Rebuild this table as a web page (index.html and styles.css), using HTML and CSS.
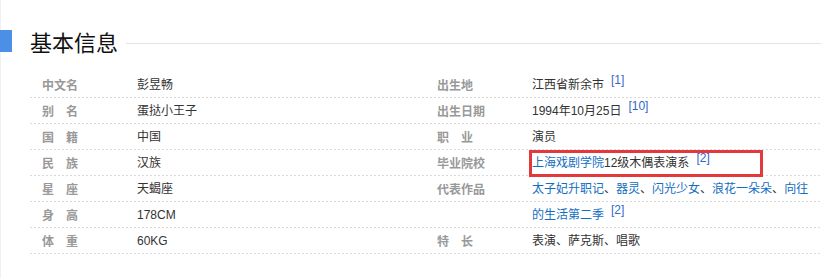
FILE: index.html
```html
<!DOCTYPE html>
<html lang="zh-CN">
<head>
<meta charset="utf-8">
<title>基本信息</title>
<link rel="stylesheet" href="styles.css">
</head>
<body>
<div class="page">
  <div class="title-row">
    <span class="bar"></span>
    <h2 class="title">基本信息</h2>
    <span class="rule"></span>
  </div>
  <div class="info">
    <dl class="col">
      <div class="item"><dt class="label">中文名</dt><dd class="value">彭昱畅</dd></div>
      <div class="item"><dt class="label">别　名</dt><dd class="value">蛋挞小王子</dd></div>
      <div class="item"><dt class="label">国　籍</dt><dd class="value">中国</dd></div>
      <div class="item"><dt class="label">民　族</dt><dd class="value">汉族</dd></div>
      <div class="item"><dt class="label">星　座</dt><dd class="value">天蝎座</dd></div>
      <div class="item"><dt class="label">身　高</dt><dd class="value">178CM</dd></div>
      <div class="item"><dt class="label">体　重</dt><dd class="value">60KG</dd></div>
    </dl>
    <dl class="col">
      <div class="item"><dt class="label">出生地</dt><dd class="value">江西省新余市<sup class="ref">[1]</sup></dd></div>
      <div class="item"><dt class="label">出生日期</dt><dd class="value">1994年10月25日<sup class="ref">[10]</sup></dd></div>
      <div class="item"><dt class="label">职　业</dt><dd class="value">演员</dd></div>
      <div class="item"><dt class="label">毕业院校</dt><dd class="value marked"><a class="link" href="#">上海戏剧学院</a>12级木偶表演系<sup class="ref">[2]</sup><span class="highlight"></span></dd></div>
      <div class="item"><dt class="label">代表作品</dt><dd class="value wrap"><a class="link" href="#">太子妃升职记</a>、<a class="link" href="#">器灵</a>、<a class="link" href="#">闪光少女</a>、<a class="link" href="#">浪花一朵朵</a>、<a class="link" href="#">向往的生活第二季</a><sup class="ref">[2]</sup></dd></div>
      <div class="item"><dt class="label">特　长</dt><dd class="value">表演、萨克斯、唱歌</dd></div>
    </dl>
  </div>
</div>
</body>
</html>
```

FILE: styles.css
```css
html, body {
  margin: 0;
  padding: 0;
  background: #fff;
}

body {
  font-family: "Liberation Sans", "Noto Sans CJK SC", sans-serif;
  font-size: 12px;
  color: #333;
}

.page {
  width: 821px;
  height: 278px;
  box-sizing: border-box;
  padding-top: 30px;
  border-left: 1px solid #f0f0f0;
}

.title-row {
  display: flex;
  align-items: flex-start;
  height: 22px;
  margin-left: -1px;
}

.bar {
  width: 12px;
  height: 22px;
  background: #4b8fe6;
  flex: none;
}

.title {
  margin: 0 0 0 18px;
  font-family: "Noto Sans CJK SC", sans-serif;
  font-size: 22px;
  line-height: 22px;
  font-weight: normal;
  color: #111;
}

.rule {
  flex: 1;
  height: 1px;
  margin: 13px 0 0 8px;
  background: #e2e2e2;
}

.info {
  display: grid;
  grid-template-columns: 395px 395px;
  margin: 20px 0 0 29px;
  background-image:
    linear-gradient(90deg, transparent 2px, #fff 2px),
    linear-gradient(to bottom, transparent 25px, #d9d9d9 25px);
  background-size: 4px 26px, 4px 26px;
  background-repeat: repeat;
}

.col {
  margin: 0;
  padding: 0 0 0 12px;
}

.item {
  display: flex;
  line-height: 26px;
}

.label {
  width: 95px;
  flex: none;
  font-family: "Noto Sans CJK SC", sans-serif;
  font-weight: bold;
  color: #999;
  white-space: nowrap;
}

.value {
  margin: 0;
  position: relative;
}

.wrap {
  width: 280px;
}

.link {
  color: #136ec2;
  text-decoration: none;
}

.ref {
  font-size: 12px;
  line-height: 0;
  vertical-align: 5px;
  margin-left: 7px;
  color: #3366cc;
}

.highlight {
  position: absolute;
  left: -3px;
  top: 0;
  width: 234px;
  height: 27px;
  box-sizing: border-box;
  border: 3px solid #e4393c;
}
```
